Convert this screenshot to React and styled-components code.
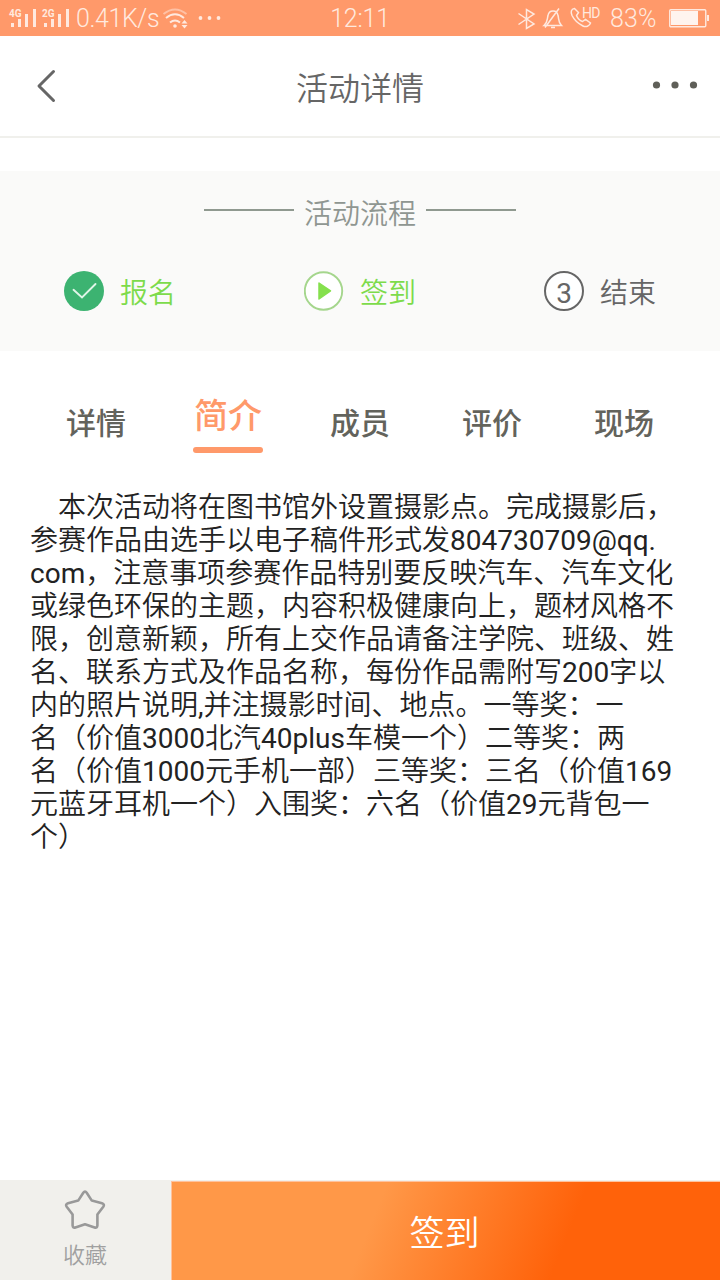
import React from 'react';
import styled, { createGlobalStyle } from 'styled-components';

const GlobalStyle = createGlobalStyle`
    * {
        box-sizing: border-box;
    }
    body {
        margin: 0;
        background: #fff;
        font-family: Roboto, "Noto Sans CJK SC", sans-serif;
        text-spacing-trim: space-all;
    }
`

const Page = styled.div`
    width: 720px;
    height: 1280px;
    display: flex;
    flex-direction: column;
    background: #fff;
    overflow: hidden;
`

const StatusBar = styled.div`
    height: 36px;
    flex: none;
    display: grid;
    grid-template-columns: 300px 120px 300px;
    background: #ff996a;
    color: #ffe9df;
    font-size: 25px;
    font-weight: 350;
    line-height: 37px;
`

const StatusLeft = styled.div`
    display: flex;
    padding-left: 8px;
`

const StatusTime = styled.div`
    text-align: center;
    letter-spacing: -0.2px;
`

const StatusRight = styled.div`
    display: flex;
    justify-content: flex-end;
`

const Speed = styled.span`
    width: 83px;
    margin-left: 2px;
    margin-right: 3px;
    letter-spacing: -0.4px;
    white-space: nowrap;
`

const Percent = styled.span`
    width: 49px;
    margin-right: 10px;
    letter-spacing: 0.1px;
    white-space: nowrap;
`

const Header = styled.header`
    height: 102px;
    flex: none;
    display: flex;
    align-items: center;
    justify-content: space-between;
    padding: 0 22px 0 35px;
    border-bottom: 2px solid #f0f0ec;
`

const HeaderTitle = styled.h1`
    margin: 0;
    padding: 5px 0 0 11px;
    font-size: 32px;
    font-weight: 350;
    line-height: 48px;
    color: #666;
`

const Process = styled.section`
    height: 180px;
    flex: none;
    margin-top: 33px;
    background: #fafaf9;
`

const ProcessTitle = styled.div`
    display: flex;
    align-items: center;
    justify-content: center;
    gap: 10px;
    height: 82px;
    font-size: 28px;
    font-weight: 350;
    color: #8f9691;
`

const Rule = styled.span`
    width: 90px;
    height: 2px;
    margin-bottom: 4px;
    background: #8f9990;
`

const Steps = styled.div`
    display: grid;
    grid-template-columns: repeat(3, 240px);
    padding-top: 18px;
`

const Step = styled.div`
    display: flex;
    align-items: center;
    gap: 16px;
    height: 40px;
    padding-left: 64px;
    font-size: 28px;
    font-weight: 350;
    color: ${props => props.$color};
`

const StepNumber = styled.span`
    width: 40px;
    height: 40px;
    border: 2px solid #666;
    border-radius: 50%;
    background: #fff;
    font-weight: 400;
    line-height: 42px;
    text-align: center;
`

const Tabs = styled.nav`
    display: flex;
    height: 102px;
    flex: none;
    padding: 0 30px;
`

const Tab = styled.div`
    width: 132px;
    display: flex;
    flex-direction: column;
    align-items: center;
    padding-top: ${props => props.$active ? '42px' : '50px'};
    font-size: ${props => props.$active ? '34px' : '30px'};
    font-weight: 500;
    line-height: 46px;
    color: ${props => props.$active ? '#ff996a' : '#63635c'};
`

const TabLine = styled.span`
    width: 70px;
    height: 6px;
    margin-top: 8px;
    border-radius: 3px;
    background: #ff996a;
`

const Intro = styled.article`
    flex: 1;
    padding: 38px 0 0 30px;
    font-size: 28px;
    font-weight: 350;
    line-height: 33px;
    color: #222;
`

const IntroLine = styled.div`
    height: 33px;
    padding-left: ${props => props.$indent ? '28px' : '0'};
    white-space: nowrap;
`

const Latin = styled.span`
    font-weight: 400;
`

const Footer = styled.footer`
    display: flex;
    height: 100px;
    flex: none;
    background: #f1f0ec;
`

const Favorite = styled.div`
    width: 171px;
    display: flex;
    flex-direction: column;
    align-items: center;
    gap: 8px;
    padding: 8px 1px 0 0;
    font-size: 22px;
    font-weight: 350;
    line-height: 32px;
    color: #a0a0a0;
`

const SignButton = styled.button`
    flex: 1;
    margin: 1px 0 0;
    padding: 0 3px 2px 0;
    border: 0;
    border-top: 1px solid #ffc29c;
    border-left: 1px solid #ffc29c;
    background: linear-gradient(112deg, #ff9848 36.7%, #ff620a 71%);
    color: #fff;
    font-family: inherit;
    font-size: 35px;
    font-weight: 350;
`

const Signal = ({ label }) => (
    <svg width="33" height="36" viewBox="0 0 33 36" fill="#ffe9df">
        <text x="1" y="16.5" fontSize="10" fontWeight="700" fontFamily="Roboto">{label}</text>
        <rect x="3" y="23" width="3" height="4" />
        <rect x="10" y="19" width="3" height="8" />
        <rect x="17" y="14" width="3" height="13" />
        <rect x="25" y="9" width="3" height="18" />
    </svg>
)

const Wifi = () => (
    <svg width="64" height="36" viewBox="0 0 64 36" fill="none" stroke="#ffe9df" strokeWidth="2">
        <path d="M1.500 14Q13 5 24.500 14" opacity="0.5" />
        <path d="M4 18Q13 10.500 22 18" />
        <path d="M8 22.500Q13 18.500 18 22.500" />
        <g fill="#ffe9df" stroke="none">
            <circle cx="13" cy="26" r="1.800" />
            <path d="M19.500 23.500L22.500 20L25.500 23.500zM19.500 25L22.500 28.500L25.500 25z" />
            <circle cx="38.500" cy="18" r="1.900" />
            <circle cx="47.500" cy="18" r="1.900" />
            <circle cx="56.500" cy="18" r="1.900" />
        </g>
    </svg>
)

const StatusIcons = () => (
    <svg width="94" height="36" viewBox="0 0 94 36" fill="none" stroke="#ffe9df" strokeWidth="1.500">
        <path d="M2.500 13.500L18 24L10.500 28.500V9.500L18 14L2.500 24.500" />
        <path d="M28 25.500H45.500C42 22 43 19 42 15.500C41 9.500 33 9.500 32 15.500C31 19 32 22 28 25.500ZM35 27.500H39M29 27.500L43 8.500" />
        <path d="M58.500 8.500C55 9 54.500 12 56 15.500C58.500 20.500 62 23.500 67 26C70 27.500 73.500 26 74.500 23L69.500 19.500L66.500 21.500C63.500 20.500 61.500 18 60.500 15.500L62.500 12.500Z" />
        <text x="66" y="17.500" fill="#ffe9df" stroke="none" fontSize="14" fontWeight="400" fontFamily="Roboto" letterSpacing="-0.800">HD</text>
    </svg>
)

const Battery = () => (
    <svg width="51" height="36" viewBox="0 0 51 36">
        <rect x="0.750" y="9.750" width="36" height="17" rx="1" fill="none" stroke="#ffe9df" strokeWidth="1.400" />
        <rect x="2" y="11" width="27" height="14" fill="#fff4ee" />
        <rect x="38" y="15" width="2" height="6" fill="#ffe9df" />
    </svg>
)

const BackIcon = () => (
    <svg width="22" height="36" viewBox="0 0 22 36" fill="none" stroke="#666" strokeWidth="3" strokeLinecap="round" strokeLinejoin="round">
        <path d="M18.500 3.500L4 18L18.500 32.500" />
    </svg>
)

const MoreIcon = () => (
    <svg width="46" height="12" viewBox="0 0 46 12" fill="#5f5f58">
        <circle cx="4.500" cy="5" r="3.600" />
        <circle cx="23" cy="5" r="3.600" />
        <circle cx="41.500" cy="5" r="3.600" />
    </svg>
)

const DoneIcon = () => (
    <svg width="40" height="40" viewBox="0 0 40 40" fill="none">
        <circle cx="20" cy="20" r="20" fill="#3cb371" />
        <path d="M9.500 18.800L18 26.500L31.500 13" stroke="#e0f5e8" strokeWidth="1.900" strokeLinecap="round" />
    </svg>
)

const PlayIcon = () => (
    <svg width="40" height="40" viewBox="0 0 40 40">
        <circle cx="19.500" cy="20" r="18.700" fill="#fff" stroke="#a5d68d" strokeWidth="1.900" />
        <path d="M15 12L26.500 19.800L15 28Z" fill="#85e04d" stroke="#85e04d" strokeWidth="1.500" strokeLinejoin="round" />
    </svg>
)

const StarIcon = () => (
    <svg width="44" height="44" viewBox="0 0 44 44" fill="none" stroke="#999" strokeWidth="2.600" strokeLinejoin="round">
        <path d="M20.300 4.800Q22 2.200 23.700 4.800L28.800 12.600L39 15.300Q42 16.300 40.300 18.800L34.400 26.500V37.500Q34.200 40.200 31.600 39.400L22 36.200L12.400 39.400Q9.800 40.200 9.600 37.500V26.500L3.700 18.800Q2 16.300 5 15.300L15.200 12.600Z" />
    </svg>
)

const tabs = ['详情', '简介', '成员', '评价', '现场']

const lines = [
    '本次活动将在图书馆外设置摄影点。完成摄影后，',
    '参赛作品由选手以电子稿件形式发804730709@qq.',
    'com，注意事项参赛作品特别要反映汽车、汽车文化',
    '或绿色环保的主题，内容积极健康向上，题材风格不',
    '限，创意新颖，所有上交作品请备注学院、班级、姓',
    '名、联系方式及作品名称，每份作品需附写200字以',
    '内的照片说明,并注摄影时间、地点。一等奖：一',
    '名（价值3000北汽40plus车模一个）二等奖：两',
    '名（价值1000元手机一部）三等奖：三名（价值169',
    '元蓝牙耳机一个）入围奖：六名（价值29元背包一',
    '个）',
]

// digits and letters need a heavier cut than the hanzi around them
const markLatin = line => line.split(/([\w@.,]+)/).map((part, i) => i % 2 ? <Latin key={i}>{part}</Latin> : part)

class App extends React.Component {
    state = {
        tab: 1,
    }

    render(){
    return(
        <Page lang="zh-CN">
            <GlobalStyle />
            <StatusBar>
                <StatusLeft>
                    <Signal label="4G" />
                    <Signal label="2G" />
                    <Speed>0.41K/s</Speed>
                    <Wifi />
                </StatusLeft>
                <StatusTime>12:11</StatusTime>
                <StatusRight>
                    <StatusIcons />
                    <Percent>83%</Percent>
                    <Battery />
                </StatusRight>
            </StatusBar>
            <Header>
                <BackIcon />
                <HeaderTitle>活动详情</HeaderTitle>
                <MoreIcon />
            </Header>
            <Process>
                <ProcessTitle><Rule />活动流程<Rule /></ProcessTitle>
                <Steps>
                    <Step $color="#7ddb4b"><DoneIcon />报名</Step>
                    <Step $color="#7ddb4b"><PlayIcon />签到</Step>
                    <Step $color="#666"><StepNumber>3</StepNumber>结束</Step>
                </Steps>
            </Process>
            <Tabs>
                {tabs.map((name, i) => (
                    <Tab key={name} $active={this.state.tab === i} onClick={() => this.setState({tab: i})}>
                        {name}
                        {this.state.tab === i && <TabLine />}
                    </Tab>
                ))}
            </Tabs>
            <Intro>
                {lines.map((line, i) => <IntroLine key={line} $indent={i === 0}>{markLatin(line)}</IntroLine>)}
            </Intro>
            <Footer>
                <Favorite><StarIcon />收藏</Favorite>
                <SignButton>签到</SignButton>
            </Footer>
        </Page>
    )}
}

export default App
